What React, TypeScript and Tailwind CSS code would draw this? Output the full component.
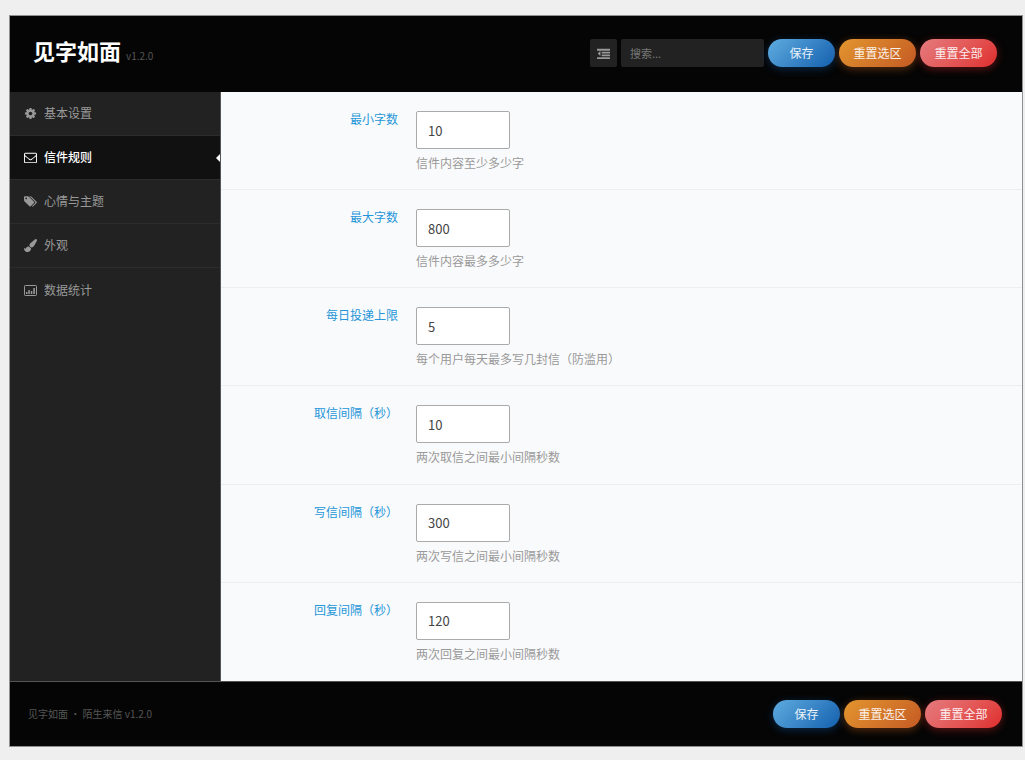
import { useState } from "react";
import type { ReactNode } from "react";
import clsx from "clsx";

type IconProps = { className?: string };

function OutdentIcon({ className }: IconProps) {
  return (
    <svg viewBox="0 0 1792 1792" fill="currentColor" className={className} aria-hidden="true">
      <path d="M384 544v576q0 13-9.5 22.5t-22.5 9.5q-14 0-23-9l-288-288q-9-9-9-23t9-23l288-288q9-9 23-9 13 0 22.5 9.5t9.5 22.5z" transform="translate(90 64)" />
      <rect x="0" y="256" width="1792" height="256" rx="32" />
      <rect x="640" y="640" width="1152" height="256" rx="32" />
      <rect x="640" y="1024" width="1152" height="256" rx="32" />
      <rect x="0" y="1408" width="1792" height="256" rx="32" />
    </svg>
  );
}

function CogIcon({ className }: IconProps) {
  return (
    <svg viewBox="0 0 1792 1792" fill="currentColor" className={className} aria-hidden="true">
      <path d="M1152 896q0-106-75-181t-181-75-181 75-75 181 75 181 181 75 181-75 75-181zm512-109v222q0 12-8 23t-20 13l-185 28q-19 54-39 91 35 50 107 138 10 12 10 25t-9 23q-27 37-99 108t-94 71q-12 0-26-9l-138-108q-44 23-91 38-16 136-29 186-7 28-36 28h-222q-14 0-24.5-8.5t-11.5-21.5l-28-184q-49-16-90-37l-141 107q-10 9-25 9-14 0-25-11-126-114-165-168-7-10-7-23 0-12 8-23 15-21 51-66.5t54-70.5q-27-50-41-99l-183-27q-13-2-21-12.5t-8-23.5v-222q0-12 8-23t19-13l186-28q14-46 39-92-40-57-107-138-10-12-10-24 0-10 9-23 26-36 98.5-107.5t94.5-71.5q13 0 26 10l138 107q44-23 91-38 16-136 29-186 7-28 36-28h222q14 0 24.5 8.5t11.5 21.5l28 184q49 16 90 37l142-107q9-9 24-9 13 0 25 10 129 119 165 170 7 8 7 22 0 12-8 23-15 21-51 66.5t-54 70.5q26 50 41 98l183 28q13 2 21 12.5t8 23.5z" />
    </svg>
  );
}

function EnvelopeIcon({ className }: IconProps) {
  return (
    <svg viewBox="0 0 1792 1792" fill="currentColor" className={className} aria-hidden="true">
      <path d="M1664 1504v-768q-32 36-69 66-268 206-426 338-51 43-83 67t-86.5 48.5-102.5 24.5h-2q-48 0-102.5-24.5t-86.5-48.5-83-67q-158-132-426-338-37-30-69-66v768q0 13 9.5 22.5t22.5 9.5h1472q13 0 22.5-9.5t9.5-22.5zm0-1051v-24.5l-.5-13-3-12.5-5.5-9-9-7.5-14-2.5h-1472q-13 0-22.5 9.5t-9.5 22.5q0 168 147 284 193 152 401 317 6 5 35 29.5t46 37.5 44.5 31.5 50.5 27.5 43 9h2q20 0 43-9t50.5-27.5 44.5-31.5 46-37.5 35-29.5q208-165 401-317 54-43 100.5-115.5t46.5-131.5zm128-37v1088q0 66-47 113t-113 47h-1472q-66 0-113-47t-47-113v-1088q0-66 47-113t113-47h1472q66 0 113 47t47 113z" />
    </svg>
  );
}

function TagsIcon({ className }: IconProps) {
  return (
    <svg viewBox="0 0 1920 1792" fill="currentColor" className={className} aria-hidden="true">
      <path d="M448 448q0-53-37.5-90.5t-90.5-37.5-90.5 37.5-37.5 90.5 37.5 90.5 90.5 37.5 90.5-37.5 37.5-90.5zm1067 576q0 53-37 90l-491 492q-39 37-91 37-53 0-90-37l-715-716q-38-37-64.5-101t-26.5-117v-416q0-52 38-90t90-38h416q53 0 117 26.5t102 64.5l715 714q37 39 37 91zm384 0q0 53-37 90l-491 492q-39 37-91 37-36 0-59-14t-53-45l470-470q37-37 37-90 0-52-37-91l-715-714q-38-38-102-64.5t-117-26.5h224q53 0 117 26.5t102 64.5l715 714q37 39 37 91z" />
    </svg>
  );
}

function BrushIcon({ className }: IconProps) {
  return (
    <svg viewBox="0 0 1792 1792" fill="currentColor" className={className} aria-hidden="true">
      <path d="M1615 0q70 0 122.5 46.5t52.5 116.5q0 63-45 151-332 629-465 752-97 91-218 91-126 0-216.5-92.5t-90.5-219.5q0-128 92-212l638-579q59-54 130-54zm-909 1034q39 76 106.5 130t150.5 76l1 71q4 213-129.5 347t-348.5 134q-123 0-218-46.5t-152.5-127.5-86.5-183-29-220q7 5 41 30t62 44.5 59 36.5 46 17q41 0 55-37 25-66 57.5-112.5t69.5-76 88-47.5 103-25.5 125-10.5z" />
    </svg>
  );
}

function ChartIcon({ className }: IconProps) {
  return (
    <svg viewBox="0 0 13 13" fill="currentColor" className={className} aria-hidden="true">
      <rect x="0.5" y="1.5" width="12" height="10" rx="0.8" fill="none" stroke="currentColor" />
      <path d="M2 8h1.5v2H2zM4.3 6h1.5v4H4.3zM6.8 7h1.5v3H6.8zM9.3 4h1.6v6H9.3z" />
    </svg>
  );
}

const menu: { id: string; label: string; icon: ReactNode }[] = [
  { id: "basic", label: "基本设置", icon: <CogIcon className="h-[13px] w-[13px]" /> },
  { id: "rules", label: "信件规则", icon: <EnvelopeIcon className="h-[13px] w-[13px]" /> },
  { id: "mood", label: "心情与主题", icon: <TagsIcon className="h-[13px] w-[13px]" /> },
  { id: "look", label: "外观", icon: <BrushIcon className="h-[13px] w-[13px]" /> },
  { id: "stats", label: "数据统计", icon: <ChartIcon className="h-[13px] w-[13px]" /> },
];

const fields = [
  { id: "min_length", label: "最小字数", value: "10", desc: "信件内容至少多少字" },
  { id: "max_length", label: "最大字数", value: "800", desc: "信件内容最多多少字" },
  { id: "daily_limit", label: "每日投递上限", value: "5", desc: "每个用户每天最多写几封信（防滥用）" },
  { id: "fetch_interval", label: "取信间隔（秒）", value: "10", desc: "两次取信之间最小间隔秒数" },
  { id: "write_interval", label: "写信间隔（秒）", value: "300", desc: "两次写信之间最小间隔秒数" },
  { id: "reply_interval", label: "回复间隔（秒）", value: "120", desc: "两次回复之间最小间隔秒数" },
];

function ActionButtons() {
  const base = "h-7 rounded-full text-xs text-white/90 cursor-pointer";
  return (
    <div className="flex gap-1">
      <button type="submit" className={clsx(base, "w-[67px] bg-linear-135 from-[#5eace0] to-[#1260ae] shadow-[0_2px_8px_rgba(18,96,174,0.4)]")}>
        保存
      </button>
      <button type="button" className={clsx(base, "w-[77px] bg-linear-135 from-[#e2952f] to-[#c45a24] shadow-[0_2px_8px_rgba(210,105,30,0.4)]")}>
        重置选区
      </button>
      <button type="button" className={clsx(base, "w-[77px] bg-linear-135 from-[#e57a7e] to-[#df2a2c] shadow-[0_2px_8px_rgba(223,42,44,0.4)]")}>
        重置全部
      </button>
    </div>
  );
}

export default function App() {
  const [active, setActive] = useState("rules");
  const [values, setValues] = useState<Record<string, string>>(
    Object.fromEntries(fields.map((f) => [f.id, f.value]))
  );

  return (
    <div className="flex min-h-screen flex-col bg-[#efefef] pt-[15px] pr-[2px] pb-[13px] pl-[9px] font-['Noto_Sans_CJK_SC',sans-serif]">
      <form
        className="flex flex-1 flex-col border border-[#8f9291] bg-[#050505]"
        onSubmit={(e) => e.preventDefault()}
      >
        <header className="flex h-[76px] items-center justify-between pr-[25px] pb-[2px] pl-[23px]">
          <h1 className="text-[22px] leading-8 font-bold text-white">
            见字如面 <small className="text-[10px] font-normal text-[#555]">v1.2.0</small>
          </h1>
          <div className="flex items-center gap-1">
            <button
              type="button"
              aria-label="展开全部设置"
              className="flex h-7 w-[27px] items-center justify-center rounded-xs bg-[#222] text-[#999]"
            >
              <OutdentIcon className="h-[13px] w-[13px]" />
            </button>
            <input
              type="text"
              aria-label="搜索"
              placeholder="搜索..."
              className="h-7 w-[143px] rounded-xs bg-[#222] px-[9px] text-[11px] text-[#ccc] outline-none placeholder:text-[#777]"
            />
            <ActionButtons />
          </div>
        </header>

        <div className="flex flex-1">
          <nav className="w-[211px] shrink-0 border-r border-[#555] bg-[#222]">
            <ul className="divide-y divide-[#2c2c2c]">
              {menu.map((item) => (
                <li key={item.id} className="h-11">
                  <a
                    href={`#${item.id}`}
                    onClick={() => setActive(item.id)}
                    className={clsx(
                      "relative flex h-full items-center gap-[7px] pl-[14px] text-xs",
                      active === item.id ? "bg-[#111] font-medium text-white" : "text-[#999]"
                    )}
                  >
                    {item.icon}
                    <span className="pb-px">{item.label}</span>
                    {active === item.id && (
                      <span className="absolute top-1/2 right-0 -translate-y-1/2 border-y-4 border-r-4 border-y-transparent border-r-white" />
                    )}
                  </a>
                </li>
              ))}
            </ul>
          </nav>

          <main className="grid flex-1 auto-rows-fr bg-[#f9fafc]">
            {fields.map((field) => (
              <div key={field.id} className="flex gap-[18px] border-b border-[#eceef0] pt-[19px] pb-4 last:border-b-0">
                <label htmlFor={field.id} className="w-[177px] shrink-0 text-right text-xs leading-4 text-[#2596d8]">
                  {field.label}
                </label>
                <div>
                  <input
                    id={field.id}
                    type="text"
                    inputMode="numeric"
                    value={values[field.id]}
                    onChange={(e) => setValues({ ...values, [field.id]: e.target.value })}
                    className="block h-[38px] w-[94px] rounded-xs border border-[#aaa] bg-white px-[11px] text-[13px] text-[#444] outline-none"
                  />
                  <p className="mt-[5px] text-xs leading-[18px] text-[#999]">{field.desc}</p>
                </div>
              </div>
            ))}
          </main>
        </div>

        <footer className="flex h-[65px] items-center justify-between border-t border-[#555] pr-5 pl-[18px]">
          <p className="pb-[2px] text-[10px] text-[#555]">见字如面 ・ 陌生来信 v1.2.0</p>
          <ActionButtons />
        </footer>
      </form>
    </div>
  );
}
